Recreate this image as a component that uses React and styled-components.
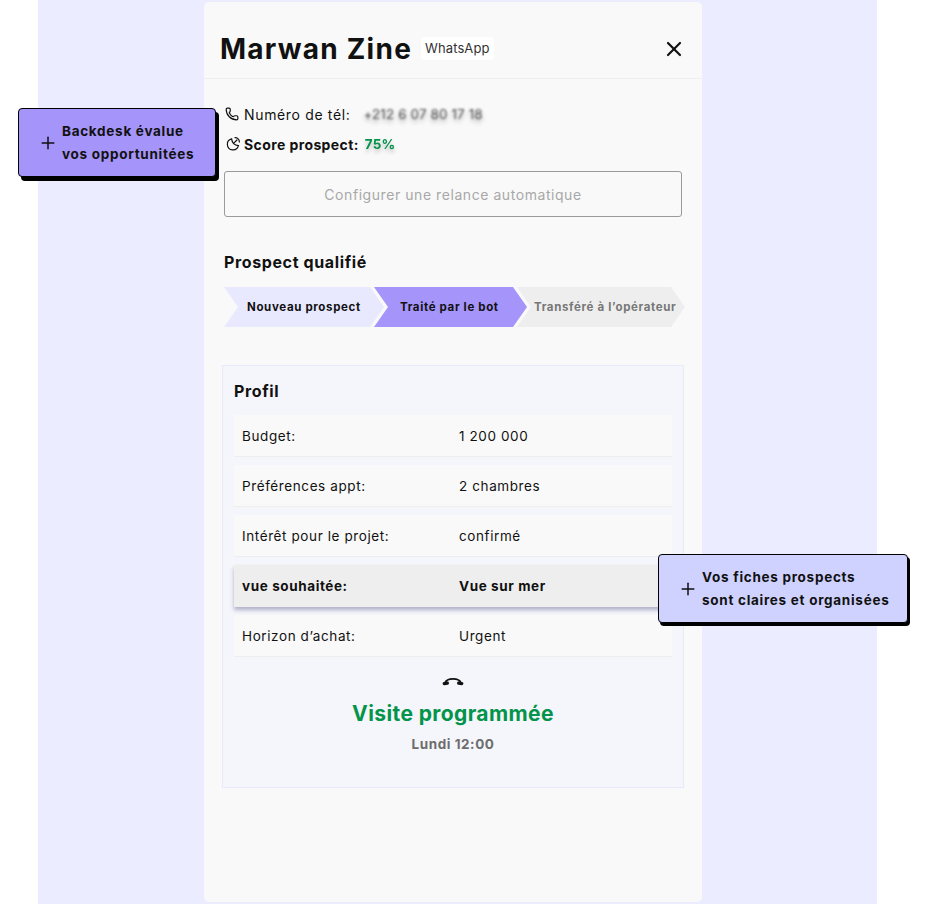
import React from 'react'
import styled, { createGlobalStyle } from 'styled-components'
import { Phone, X, Plus } from 'lucide-react'

const GlobalStyle = createGlobalStyle`
  html, body {
    margin: 0;
    padding: 0;
    background: #fff;
  }
  body {
    font-family: Inter, "Noto Sans", "Liberation Sans", sans-serif;
    color: #111;
  }
`

const Page = styled.div`
  position: relative;
  width: 940px;
  height: 904px;
  overflow: hidden;
`

const Band = styled.div`
  width: 839px;
  height: 904px;
  margin-left: 38px;
  padding: 2px 0 0 166px;
  box-sizing: border-box;
  background: #ebecff;
`

const Panel = styled.div`
  width: 498px;
  height: 900px;
  background: #f9f9f9;
  border-radius: 5px;
`

const Header = styled.div`
  height: 76px;
  padding: 0 16px 0 16px;
  display: flex;
  align-items: center;
  border-bottom: 1px solid #eee;
`

const Name = styled.h1`
  margin: 18px 0 0;
  font-size: 28px;
  line-height: 34px;
  font-weight: 700;
  letter-spacing: 1.25px;
`

const Source = styled.span`
  margin: 16px 0 0 9px;
  height: 23px;
  padding: 0 4px;
  background: #fff;
  border-radius: 4px;
  font-size: 13px;
  line-height: 23px;
  color: #333;
  letter-spacing: 0.1px;
`

const Close = styled.button`
  margin: 18px 0 0 auto;
  padding: 0;
  border: 0;
  background: none;
  display: flex;
  color: #111;
`

const Body = styled.div`
  padding: 25px 20px 0;
`

const InfoRow = styled.div`
  height: 20px;
  margin-bottom: 10px;
  display: flex;
  align-items: center;
  font-size: 14px;
  letter-spacing: ${({ $spacing }) => $spacing}px;
`

const InfoIcon = styled.span`
  width: 20px;
  flex: none;
  display: flex;
  align-items: center;
  margin-left: 1px;
  margin-right: -1px;
`

const InfoLabel = styled.span`
  font-weight: ${({ $bold }) => ($bold ? 700 : 400)};
`

const Blurred = styled.span`
  margin-left: ${({ $gap }) => $gap}px;
  color: ${({ $color }) => $color};
  font-size: 13.5px;
  font-weight: ${({ $bold }) => ($bold ? 700 : 400)};
  letter-spacing: 0.1px;
  text-shadow: 0 3px 4px rgba(0, 0, 0, ${({ $shade }) => $shade});
  filter: blur(${({ $blur }) => $blur}px);
`

const RelanceButton = styled.button`
  display: block;
  width: 458px;
  height: 46px;
  margin-top: 17px;
  border: 1px solid #9a9a9a;
  border-radius: 3px;
  background: none;
  font-family: inherit;
  font-size: 14px;
  letter-spacing: 0.56px;
  color: #a8a8a8;
`

const SectionTitle = styled.h2`
  margin: ${({ $top }) => $top}px 0 0;
  font-size: 16px;
  line-height: 22px;
  font-weight: 700;
  letter-spacing: 0.62px;
`

const Stepper = styled.div`
  display: flex;
  margin-top: 14px;
`

const Step = styled.div`
  width: ${({ $width }) => $width}px;
  height: 40px;
  margin-left: ${({ $overlap }) => -$overlap}px;
  padding-left: ${({ $pad }) => $pad}px;
  box-sizing: border-box;
  display: flex;
  align-items: center;
  flex: none;
  background: ${({ $bg }) => $bg};
  color: ${({ $color }) => $color};
  font-size: 11.5px;
  font-weight: 700;
  letter-spacing: 0.65px;
  white-space: nowrap;
  clip-path: polygon(
    0 0,
    calc(100% - 14px) 0,
    100% 50%,
    calc(100% - 14px) 100%,
    0 100%,
    14px 50%
  );
`

const ProfileCard = styled.section`
  width: 462px;
  height: 423px;
  margin: 38px 0 0 -2px;
  padding: 14px 11px 0;
  box-sizing: border-box;
  background: #f5f6fb;
  border: 1px solid #e8e9fb;
`

const ProfileRows = styled.div`
  display: flex;
  flex-direction: column;
  gap: 8px;
  margin-top: 13px;
`

const ProfileRow = styled.div`
  height: 42px;
  box-sizing: border-box;
  padding-left: 8px;
  display: grid;
  grid-template-columns: 217px 1fr;
  align-items: center;
  background: ${({ $active }) => ($active ? '#eeeeee' : '#f9f9f9')};
  border-bottom: 1px solid #eeeeee;
  box-shadow: ${({ $active }) =>
    $active ? '0 3px 4px rgba(90, 90, 140, 0.45)' : 'none'};
  font-size: 13.5px;
  font-weight: ${({ $active }) => ($active ? 700 : 400)};
  letter-spacing: 0.6px;
`

const Outcome = styled.div`
  margin-top: 12px;
  display: flex;
  flex-direction: column;
  align-items: center;
`

const OutcomeIcon = styled.div`
  display: flex;
  align-items: center;
  height: 24px;
  color: #111;
`

const OutcomeTitle = styled.div`
  margin-top: 8px;
  font-size: 21px;
  line-height: 26px;
  font-weight: 700;
  color: #03934a;
  letter-spacing: 0.4px;
`

const OutcomeTime = styled.div`
  margin-top: 7px;
  font-size: 13.5px;
  line-height: 20px;
  font-weight: 700;
  color: #6d6d6d;
  letter-spacing: 0.55px;
`

// callouts lie over the panel, so they are placed by hand
const Callout = styled.div`
  position: absolute;
  left: ${({ $left }) => $left}px;
  top: ${({ $top }) => $top}px;
  width: ${({ $width }) => $width}px;
  height: 69px;
  box-sizing: border-box;
  padding-left: 19px;
  display: flex;
  align-items: center;
  gap: 4px;
  background: ${({ $bg }) => $bg};
  border: 1px solid #000;
  border-radius: 4px;
  box-shadow: ${({ $shadow }) => $shadow};
  font-size: 13.5px;
  line-height: 23px;
  font-weight: 700;
  letter-spacing: 0.72px;
  color: #111;
`

const rows = [
  ['Budget:', '1 200 000'],
  ['Préférences appt:', '2 chambres'],
  ['Intérêt pour le projet:', 'confirmé'],
  ['vue souhaitée:', 'Vue sur mer', true],
  ['Horizon d’achat:', 'Urgent'],
]

const ScoreIcon = () => (
  <svg width="16" height="16" viewBox="0 0 16 16" fill="none" stroke="#111" strokeWidth="1.2" strokeLinecap="round">
    <path d="M6.6 2.8a5.6 5.6 0 1 0 6.8 6.8Q7.4 9 6.6 2.8z" />
    <path d="M9.3 6.7L12 4" />
    <path d="M10 1.6a4.4 4.4 0 0 1 4.4 4.4" />
  </svg>
)

const HangUpIcon = () => (
  <svg width="24" height="12" viewBox="0 0 24 12" fill="none" stroke="#111" strokeLinecap="round">
    <path d="M4 8C6 2.6 18 2.6 20 8" strokeWidth="1.8" />
    <path d="M3.2 8.6L6.4 8.2" strokeWidth="3.2" />
    <path d="M20.8 8.6L17.6 8.2" strokeWidth="3.2" />
  </svg>
)

export default function App() {
  return (
    <Page>
      <GlobalStyle />
      <Band>
        <Panel>
          <Header>
            <Name>Marwan Zine</Name>
            <Source>WhatsApp</Source>
            <Close><X size={24} strokeWidth={2.2} /></Close>
          </Header>
          <Body>
            <InfoRow $spacing={0.65}>
              <InfoIcon><Phone size={14} strokeWidth={2} /></InfoIcon>
              <InfoLabel>Numéro de tél:</InfoLabel>
              <Blurred $gap={13} $color="#555" $blur={1} $shade={0.35}>+212 6 07 80 17 18</Blurred>
            </InfoRow>
            <InfoRow $spacing={0.4}>
              <InfoIcon><ScoreIcon /></InfoIcon>
              <InfoLabel $bold>Score prospect:</InfoLabel>
              <Blurred $gap={6} $color="#03934a" $blur={0.3} $shade={0.25} $bold>75%</Blurred>
            </InfoRow>
            <RelanceButton>Configurer une relance automatique</RelanceButton>
            <SectionTitle $top={34}>Prospect qualifié</SectionTitle>
            <Stepper>
              <Step $width={160} $overlap={0} $pad={23} $bg="#e8e8ff" $color="#111">Nouveau prospect</Step>
              <Step $width={153} $overlap={10} $pad={26} $bg="#a594f9" $color="#111">Traité par le bot</Step>
              <Step $width={168} $overlap={10} $pad={17} $bg="#eeeeee" $color="#777">Transféré à l’opérateur</Step>
            </Stepper>
            <ProfileCard>
              <SectionTitle $top={0}>Profil</SectionTitle>
              <ProfileRows>
                {rows.map(([label, value, active]) => (
                  <ProfileRow key={label} $active={active}>
                    <span>{label}</span>
                    <span>{value}</span>
                  </ProfileRow>
                ))}
              </ProfileRows>
              <Outcome>
                <OutcomeIcon><HangUpIcon /></OutcomeIcon>
                <OutcomeTitle>Visite programmée</OutcomeTitle>
                <OutcomeTime>Lundi 12:00</OutcomeTime>
              </Outcome>
            </ProfileCard>
          </Body>
        </Panel>
      </Band>
      <Callout $left={18} $top={108} $width={198} $bg="#a594f9" $shadow="3px 4px 0 #000">
        <Plus size={20} strokeWidth={1.8} />
        <div>Backdesk évalue<br />vos opportunitées</div>
      </Callout>
      <Callout $left={658} $top={554} $width={250} $bg="#cfd2ff" $shadow="2px 3px 0 #000">
        <Plus size={20} strokeWidth={1.8} />
        <div>Vos fiches prospects<br />sont claires et organisées</div>
      </Callout>
    </Page>
  )
}
